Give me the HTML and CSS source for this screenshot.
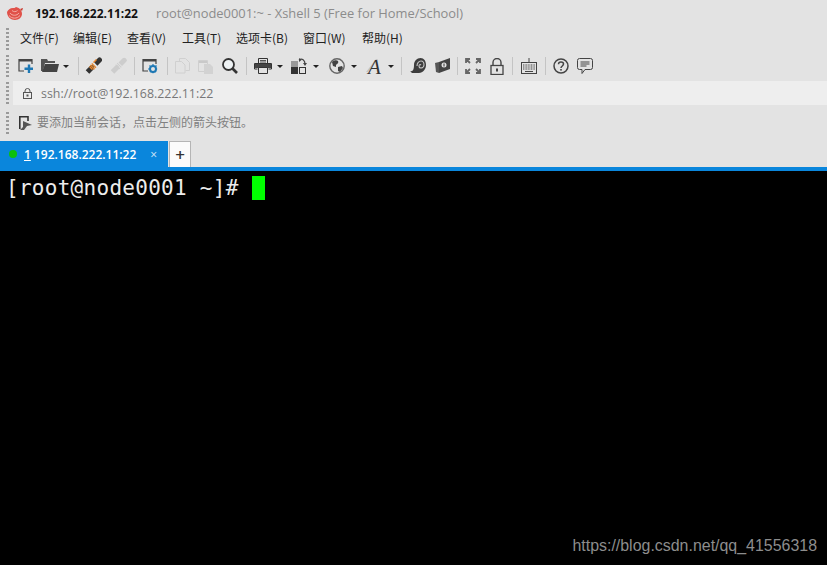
FILE: index.html
```html
<!DOCTYPE html>
<html lang="zh">
<head>
<meta charset="utf-8">
<title>Xshell 5</title>
<link rel="stylesheet" href="styles.css">
</head>
<body>
<div class="app">
  <header class="titlebar">
    <svg class="logo" width="16" height="13" viewBox="0 0 16 13"><path d="M0 5c0 5 4 8 8 8s7-3 7-6c0-3-2-6-6-7-1 1-2 1-3 1-3 0-5 2-6 4z" fill="#e0524a"/><path d="M3 6c2 3 7 3 9 0M5 3.500c1.500 1.500 4 1.500 5.500 0M2 8.500c3 3.500 8 3.500 11 0" stroke="#f5b5ad" stroke-width=".9" fill="none"/><path d="M13 2l3-1-1 3z" fill="#c9362b"/></svg>
    <span class="host">192.168.222.11:22</span>
    <span class="wintitle">root@node0001:~ - Xshell 5 (Free for Home/School)</span>
  </header>
  <nav class="menubar">
    <i class="grip"></i>
    <span class="menu m1">文件(F)</span>
    <span class="menu m2">编辑(E)</span>
    <span class="menu m3">查看(V)</span>
    <span class="menu m4">工具(T)</span>
    <span class="menu m5">选项卡(B)</span>
    <span class="menu m6">窗口(W)</span>
    <span class="menu">帮助(H)</span>
  </nav>
  <div class="toolbar">
    <i class="grip"></i>
    <svg class="ic first" width="16" height="16" viewBox="0 0 16 16"><path d="M6 13H1V1.500h13V6" fill="none" stroke="#444" stroke-width="1.200"/><rect x="1" y="1" width="13" height="2.500" fill="#444"/><path d="M11 6.500V15M6.500 10.800H15" stroke="#1e78b4" stroke-width="2.400"/></svg>
    <svg class="ic g7" width="18" height="16" viewBox="0 0 18 16"><path d="M0 1h6l1 2h7v2H4L2 13H0z" fill="#555"/><path d="M4 6h14l-2 8H1z" fill="#444"/></svg>
    <i class="caret g4"></i>
    <i class="sep s9"></i>
    <svg class="ic g6" width="17" height="18" viewBox="0 0 17 18"><g transform="rotate(-45 8.500 9)"><path d="M-1 6.500h6a2.500 2.500 0 0 1 0 5h-6z" transform="translate(1 0)" fill="#333"/><path d="M7 6v6M9 6v6" stroke="#e8872c" stroke-width="1.300"/><path d="M10.500 6.500h5.500a2.500 2.500 0 0 1 0 5h-5.500z" fill="#333" transform="translate(1 0)"/></g><path d="M8 5l3-3 1 1-3 3zM5 9l3 3-1 1-3-3z" fill="#e8872c"/></svg>
    <svg class="ic g8" width="17" height="18" viewBox="0 0 17 18"><g transform="rotate(-45 8.500 9)" fill="#cdcdcd"><path d="M0 6.500h6a2.500 2.500 0 0 1 0 5H0z"/><path d="M7 6h1v6H7zM9 6h1v6H9z"/><path d="M11 6.500h5.500a2.500 2.500 0 0 1 0 5H11z"/></g></svg>
    <i class="sep s7"></i>
    <svg class="ic g7" width="16" height="16" viewBox="0 0 16 16"><path d="M6 13H1V1.500h13V6" fill="none" stroke="#444" stroke-width="1.200"/><rect x="1" y="1" width="13" height="2.500" fill="#444"/><circle cx="11" cy="11" r="3" fill="none" stroke="#1e78b4" stroke-width="2"/><path d="M11 6v10M6 11h10M7.500 7.500l7 7M14.500 7.500l-7 7" stroke="#1e78b4" stroke-width="1.200" stroke-dasharray="1.600 6"/></svg>
    <i class="sep s9"></i>
    <svg class="ic g7" width="15" height="16" viewBox="0 0 15 16"><path d="M4.500 3.500V.500h6l4 4v8h-4M.5 3.500h6l3.500 3.500v8H.5z" fill="none" stroke="#d0d0d0"/></svg>
    <svg class="ic g8" width="16" height="16" viewBox="0 0 16 16"><path d="M1 2h8v3H1z" fill="#c9c9c9"/><path d="M.5 2.500h9v11H.5z" fill="none" stroke="#cfcfcf"/><path d="M6 6h6l3 3v7H6z" fill="#d2d2d2"/></svg>
    <svg class="ic g8" width="16" height="16" viewBox="0 0 16 16"><circle cx="6.500" cy="6.500" r="5.500" fill="#eef2f4" stroke="#333" stroke-width="1.800"/><path d="M10.500 10.500l4.500 4.500" stroke="#333" stroke-width="2.600"/></svg>
    <i class="sep s8"></i>
    <svg class="ic g7" width="18" height="16" viewBox="0 0 18 16"><path d="M4.500 5V.500h9V5M3.500 11H.5V5.500h17V11h-3" fill="none" stroke="#333"/><path d="M6 2.500h6M6 4h6" stroke="#555"/><rect x="1" y="6" width="16" height="4" fill="#444"/><path d="M4.500 9.500h9v6h-9z" fill="#e3e3e3" stroke="#333"/></svg>
    <i class="caret g5"></i>
    <svg class="ic g8" width="16" height="16" viewBox="0 0 16 16"><rect x="0" y="3" width="7" height="6" fill="#999"/><rect x="0" y="9" width="7" height="7" fill="#333"/><rect x="8.500" y="9.500" width="6" height="6" fill="none" stroke="#333"/><path d="M8 2c3-2 6 0 6 4" fill="none" stroke="#444" stroke-width="1.300"/><path d="M12 5h4l-2 3zM8 0v4l2.500-2z" fill="#444"/></svg>
    <i class="caret g6"></i>
    <svg class="ic g10" width="16" height="16" viewBox="0 0 16 16"><circle cx="8" cy="8" r="7.200" fill="none" stroke="#666" stroke-width="1.400"/><path d="M3 4c2-2 5-2 6-1 1 2-1 3-2 4L7 9 4 8zM9 9l4-1 1 2-3 4-2-1z" fill="#444"/></svg>
    <i class="caret g6"></i>
    <svg class="ic g8" width="18" height="26" viewBox="0 0 18 26"><path d="M1 19L11 6h2L3 19z" fill="#c4c4c4"/><text class="fontglyph" x="3" y="21">A</text></svg>
    <i class="caret g5"></i>
    <i class="sep s7"></i>
    <svg class="ic g8" width="16" height="16" viewBox="0 0 16 16"><path d="M0 13c3 1 4-2 4-6 0-4 3-7 6.500-7S16 3 16 7s-3 8-7 8H2z" fill="#3d3d3d"/><path d="M7 8c0-3 2-5 4-5s3 2 3 4-2 3-3 3-2-1-2-2 1-2 2-1" fill="none" stroke="#c4c4c4" stroke-width="1.100"/></svg>
    <svg class="ic g8" width="16" height="16" viewBox="0 0 16 16"><path d="M1 5l4-1v11l-3-1z" fill="#555"/><path d="M5 4l11-4v11L5 15z" fill="#444"/><circle cx="10" cy="7" r="2.500" fill="#e3e3e3"/><path d="M10 5.500v3" stroke="#333"/></svg>
    <i class="sep s7"></i>
    <svg class="ic g7" width="16" height="16" viewBox="0 0 16 16"><path d="M1 5V1h4M11 1h4v4M15 11v4h-4M5 15H1v-4M1 1l4 4M15 1l-4 4M15 15l-4-4M1 15l4-4" fill="none" stroke="#666" stroke-width="1.800"/></svg>
    <svg class="ic g9" width="14" height="17" viewBox="0 0 14 17"><path d="M3 8V4.500a4 4 0 0 1 8 0V8" fill="none" stroke="#444" stroke-width="1.400"/><rect x="1" y="7.500" width="12" height="9" fill="none" stroke="#444" stroke-width="1.300"/><rect x="6" y="10.500" width="2" height="3" fill="#444"/></svg>
    <i class="sep s8"></i>
    <svg class="ic g8" width="16" height="16" viewBox="0 0 16 16"><path d="M8 0v4" stroke="#444"/><rect x=".5" y="4.500" width="15" height="11" fill="none" stroke="#444"/><path d="M2 7h12M2 9h12M2 11h12" stroke="#444" stroke-dasharray="1 .6"/><path d="M4 13.500h8" stroke="#444"/></svg>
    <i class="sep s8"></i>
    <svg class="ic g7" width="16" height="16" viewBox="0 0 16 16"><circle cx="8" cy="8" r="7" fill="none" stroke="#444" stroke-width="1.500"/><path d="M5.500 6.200C5.500 4.700 6.700 4 8 4s2.500.8 2.500 2.100C10.500 8 8 8 8 10" fill="none" stroke="#444" stroke-width="1.500"/><rect x="7.200" y="11" width="1.600" height="1.600" fill="#444"/></svg>
    <svg class="ic g8" width="16" height="16" viewBox="0 0 16 16"><path d="M2.500.500h11a2 2 0 0 1 2 2v7a2 2 0 0 1-2 2H8l-3 4v-4H2.500a2 2 0 0 1-2-2v-7a2 2 0 0 1 2-2z" fill="none" stroke="#444"/><path d="M3.500 4h9M3.500 6h9M3.500 8h6" stroke="#444"/></svg>
  </div>
  <div class="addressrow">
    <i class="grip"></i>
    <div class="address">
      <svg width="9" height="11" viewBox="0 0 9 11"><path d="M2 5V3a2.500 2.500 0 0 1 5 0v2" fill="none" stroke="#555"/><rect x=".5" y="4.500" width="8" height="6" fill="none" stroke="#555"/><rect x="3.500" y="6.500" width="2" height="2" fill="#555"/></svg>
      <span class="url">ssh://root@192.168.222.11:22</span>
    </div>
  </div>
  <div class="hintrow">
    <i class="grip"></i>
    <svg class="hinticon" width="13" height="14" viewBox="0 0 13 14"><path d="M.8 13V.800H9V5" fill="none" stroke="#333" stroke-width="1.600"/><path d="M1 14l3-3V5l9 4-5 1-3 4z" fill="#555"/></svg>
    <span class="hint">要添加当前会话，点击左侧的箭头按钮。</span>
  </div>
  <div class="tabs">
    <div class="tab">
      <i class="dot"></i>
      <span class="tablabel"><u>1</u> 192.168.222.11:22</span>
      <span class="close">×</span>
    </div>
    <div class="newtab">+</div>
  </div>
  <main class="terminal">
    <div class="line"><span>[root@node0001 ~]# </span><i class="cursor"></i></div>
  </main>
  <div class="watermark">https://blog.csdn.net/qq_41556318</div>
</div>
</body>
</html>
```
FILE: styles.css
```css
* { box-sizing: border-box; }
html, body { margin: 0; height: 100%; overflow: hidden; }
body { font-family: "Open Sans", "Noto Sans CJK SC", sans-serif; background: #000; }
i { display: block; font-style: normal; }
.app { position: relative; width: 827px; height: 565px; display: flex; flex-direction: column; background: #e3e3e3; }

.titlebar { height: 26px; display: flex; align-items: center; padding-left: 7px; font-size: 12px; }
.host { margin-left: 12px; font-weight: 700; color: #111; font-size: 12px; }
.wintitle { margin-left: 18px; color: #8c8c8c; font-size: 12.900px; }

.grip { width: 3px; height: 22px; margin-left: 6px; background: repeating-linear-gradient(#9a9a9a 0 2px, transparent 2px 4px); flex: none; }

.menubar { height: 26px; display: flex; align-items: center; font: 12px "Noto Sans CJK SC", sans-serif; color: #222; }
.menu { flex: none; white-space: nowrap; padding-bottom: 4px; }
.menubar .grip { margin-right: 11px; }
.m1 { width: 53px; }
.m2 { width: 54px; }
.m3 { width: 55px; }
.m4 { width: 54px; }
.m5 { width: 67px; }
.m6 { width: 59px; }

.toolbar { height: 29px; display: flex; align-items: center; padding-bottom: 1px; }
.ic { flex: none; display: block; }
.first { margin-left: 9px; }
.g4 { margin-left: 4px; }
.g5 { margin-left: 5px; }
.g6 { margin-left: 6px; }
.g7 { margin-left: 7px; }
.g8 { margin-left: 8px; }
.g9 { margin-left: 9px; }
.g10 { margin-left: 10px; }
.caret { flex: none; width: 0; height: 0; border: 3px solid transparent; border-top: 3px solid #222; border-bottom: 0; }
.sep { flex: none; width: 1px; height: 18px; background: #c4c4c4; }
.s7 { margin-left: 7px; }
.s8 { margin-left: 8px; }
.s9 { margin-left: 9px; }
.fontglyph { font: italic 21px "Liberation Serif", serif; fill: #333; }

.addressrow { height: 24px; display: flex; align-items: center; }
.address { flex: 1; height: 24px; margin-left: 4px; background: #eeeeee; display: flex; align-items: center; padding-left: 10px; }
.url { margin-left: 9px; font-size: 12.400px; color: #777; }

.hintrow { height: 36px; display: flex; align-items: center; }
.hinticon { margin-left: 10px; }
.hint { margin-left: 5px; padding-bottom: 3px; font: 12px "Noto Sans CJK SC", sans-serif; color: #808080; }

.tabs { height: 26px; display: flex; align-items: flex-end; }
.tab { width: 168px; height: 26px; background: #0a86dc; color: #fff; display: flex; align-items: center; padding-left: 9px; }
.dot { width: 8px; height: 8px; border-radius: 50%; background: #0cc00c; }
.tablabel { margin-left: 7px; font-size: 12px; font-weight: 600; }
.close { margin-left: 14px; font-size: 12px; color: #d5e9f8; }
.newtab { width: 22px; height: 26px; margin-left: 1px; background: #fbfbfb; border: 1px solid #b5b5b5; border-bottom: 0; display: flex; align-items: center; justify-content: center; font-size: 17px; font-weight: 600; color: #333; }

.terminal { flex: 1; background: #000; border-top: 4px solid #0a86dc; padding: 5px 0 0 6px; }
.line { display: flex; align-items: flex-start; height: 24px; font: 21px/24px "DejaVu Sans Mono", monospace; letter-spacing: .28px; color: #ececec; white-space: pre; }
.cursor { width: 13px; height: 24px; background: #00ff00; }

.watermark { position: absolute; right: 10px; bottom: 10px; font: 15.950px "Liberation Sans", sans-serif; color: #8d8d8d; }
```
